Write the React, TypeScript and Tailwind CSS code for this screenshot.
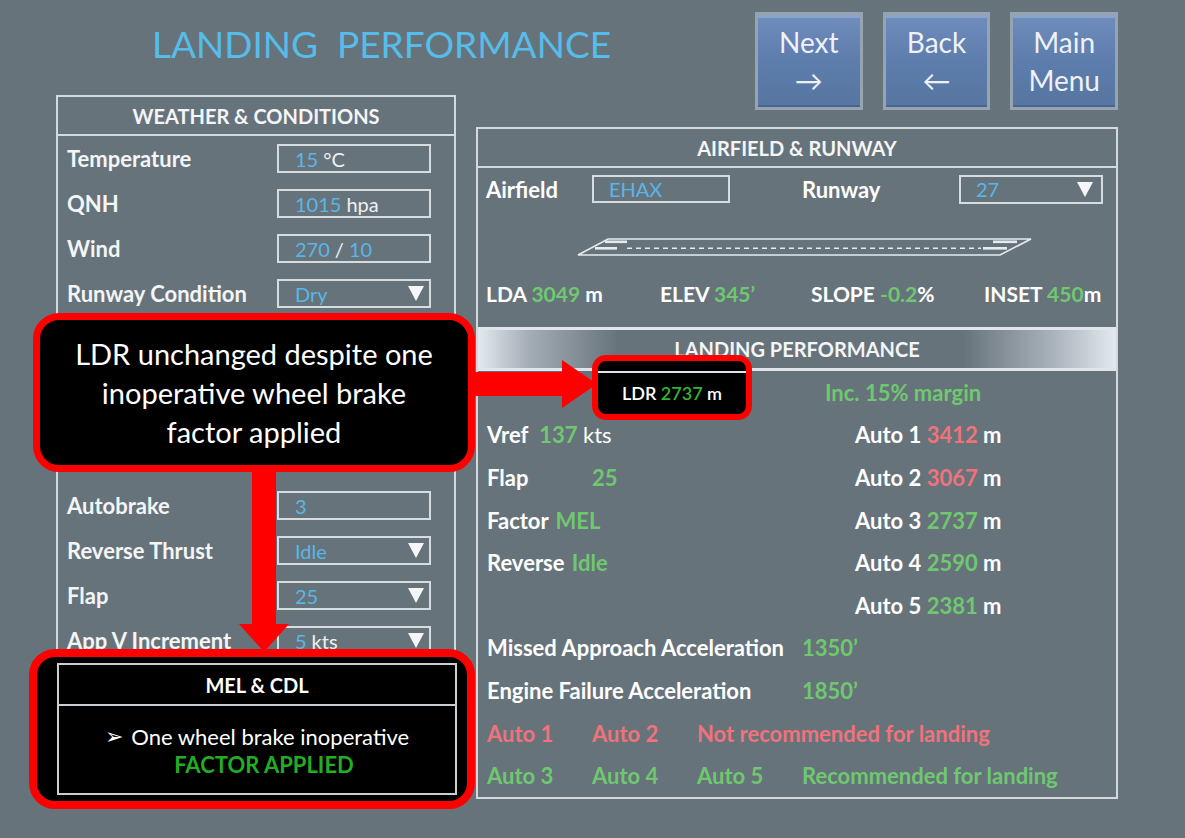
import React from 'react';

const G = 'text-[#6fc86f]';
const R = 'text-[#f0727a]';
const B = 'text-[#5ab6e6]';

function Caret() {
  return (
    <svg className="ml-auto" width="16" height="15" viewBox="0 0 16 15">
      <polygon points="0,0 16,0 8,15" fill="#f4f6f8" />
    </svg>
  );
}

function Field({ label, value, unit, drop }: { label: string; value: string; unit?: React.ReactNode; drop?: boolean }) {
  return (
    <div className="h-[45px] flex items-center pl-[9px]">
      <div className="w-[210px] font-bold text-[22px] text-[#f3f5f7] whitespace-nowrap">{label}</div>
      <div className="w-[154px] h-[29px] border-2 border-[#d6dce0] flex items-center pl-[16px] pr-[5px] text-[20px]">
        <span className={B}>{value}</span>
        {unit && <span className="ml-[5px] text-[#eef1f3]">{unit}</span>}
        {drop && <Caret />}
      </div>
    </div>
  );
}

function NavButton({ top, bottom }: { top: string; bottom: string }) {
  return (
    <div className="w-[108px] h-[98px] border-[3px] border-[#97a3b1] bg-gradient-to-b from-[#6f8dbd] via-[#5d7dad] to-[#56759f] shadow-[inset_0_3px_0_#8aa3c9,inset_0_-2px_0_#4a6590] flex flex-col items-center justify-center text-[28px] leading-[38px] text-[#eef2f8]">
      <span>{top}</span>
      <span>{bottom}</span>
    </div>
  );
}

export default function App() {
  return (
    <div className="relative w-[1185px] h-[838px] overflow-hidden bg-[#67737b] font-['Lato','Liberation_Sans',sans-serif] text-white">
      <div className="flex">
        {/* left column */}
        <div className="ml-[56px] w-[400px] flex flex-col">
          <div className="h-[95px] pt-[25px] pl-[96px] whitespace-nowrap text-[37px] leading-none text-[#56bce9]">
            LANDING&nbsp;&nbsp;PERFORMANCE
          </div>
          <div className="border-2 border-[#d3d9dd]">
            <div className="h-[39px] border-b-2 border-[#d3d9dd] flex items-center justify-center font-bold text-[20px] text-[#f3f5f7]">
              WEATHER &amp; CONDITIONS
            </div>
            <Field label="Temperature" value="15" unit="°C" />
            <Field label="QNH" value="1015" unit="hpa" />
            <Field label="Wind" value="270" unit={<span>/ <span className={B}>10</span></span>} />
            <Field label="Runway Condition" value="Dry" drop />
            <div className="h-[167px]" />
            <Field label="Autobrake" value="3" />
            <Field label="Reverse Thrust" value="Idle" drop />
            <Field label="Flap" value="25" drop />
            <Field label="App V Increment" value="5" unit="kts" drop />
            <div className="h-[130px]" />
          </div>
        </div>

        {/* right column */}
        <div className="ml-[20px] w-[642px] flex flex-col">
          <div className="pt-[12px] pl-[279px] flex gap-[20px]">
            <NavButton top="Next" bottom="→" />
            <NavButton top="Back" bottom="←" />
            <NavButton top="Main" bottom="Menu" />
          </div>
          <div className="mt-[17px] border-2 border-[#d3d9dd] text-[22px]">
            <div className="h-[39px] border-b-2 border-[#d3d9dd] flex items-center justify-center font-bold text-[20px] text-[#f3f5f7]">
              AIRFIELD &amp; RUNWAY
            </div>
            <div className="h-[42px] flex items-center pl-[8px]">
              <div className="w-[106px] font-bold">Airfield</div>
              <div className="w-[138px] h-[28px] border-2 border-[#d6dce0] flex items-center pl-[15px] text-[20px]">
                <span className={B}>EHAX</span>
              </div>
              <div className="ml-[72px] w-[157px] font-bold">Runway</div>
              <div className="w-[144px] h-[29px] border-2 border-[#d6dce0] flex items-center pl-[15px] pr-[8px] text-[20px]">
                <span className={B}>27</span>
                <Caret />
              </div>
            </div>
            <div className="mt-[27px] h-[19px] pl-[99px]">
              <svg width="460" height="19" viewBox="0 0 460 19" fill="none">
                <polygon points="31,2 454,2 423,18 1,18" stroke="#e6ebee" strokeWidth="1.6" />
                <rect x="28" y="3.5" width="22" height="2.6" fill="#e6ebee" />
                <rect x="18" y="10" width="22" height="2.6" fill="#e6ebee" />
                <rect x="416" y="3.5" width="24" height="2.6" fill="#e6ebee" />
                <rect x="406" y="10" width="24" height="2.6" fill="#e6ebee" />
                <line x1="50" y1="11.3" x2="404" y2="11.3" stroke="#e6ebee" strokeWidth="1.4" strokeDasharray="5 4" />
              </svg>
            </div>
            <div className="mt-[25px] h-[26px] flex items-center pl-[8px] font-bold text-[21px]">
              <div className="w-[174px]">LDA <span className={G}>3049</span> m</div>
              <div className="w-[151px]">ELEV <span className={G}>345’</span></div>
              <div className="w-[173px]">SLOPE <span className={G}>-0.2</span>%</div>
              <div>INSET <span className={G}>450</span>m</div>
            </div>
            <div className="mt-[20px] h-[44px] border-y-[3px] border-[#dfe5ea] bg-[linear-gradient(to_right,#e3e9ef_0%,#a3adb5_8%,#67737b_22%,#67737b_76%,#a8b2ba_90%,#e3e9ef_100%)] flex items-center justify-center font-bold text-[20px] text-[#f3f5f7]">
              LANDING PERFORMANCE
            </div>
            <div className="pl-[9px] font-bold">
              <div className="h-[42.6px] flex items-center">
                <div className="w-[338px]" />
                <span className={G}>Inc. 15% margin</span>
              </div>
              <div className="h-[42.6px] flex items-center">
                <div className="w-[368px]">Vref <span className={`${G} ml-[6px]`}>137</span> <span className="font-normal">kts</span></div>
                <div>Auto 1 <span className={R}>3412</span> m</div>
              </div>
              <div className="h-[42.6px] flex items-center">
                <div className="w-[368px] flex"><span className="w-[105px]">Flap</span><span className={G}>25</span></div>
                <div>Auto 2 <span className={R}>3067</span> m</div>
              </div>
              <div className="h-[42.6px] flex items-center">
                <div className="w-[368px]">Factor <span className={`${G} ml-[2px]`}>MEL</span></div>
                <div>Auto 3 <span className={G}>2737</span> m</div>
              </div>
              <div className="h-[42.6px] flex items-center">
                <div className="w-[368px]">Reverse <span className={`${G} ml-[2px]`}>Idle</span></div>
                <div>Auto 4 <span className={G}>2590</span> m</div>
              </div>
              <div className="h-[42.6px] flex items-center">
                <div className="w-[368px]" />
                <div>Auto 5 <span className={G}>2381</span> m</div>
              </div>
              <div className="h-[42.6px] flex items-center">
                <div className="w-[315px] whitespace-nowrap">Missed Approach Acceleration</div>
                <span className={G}>1350’</span>
              </div>
              <div className="h-[42.6px] flex items-center">
                <div className="w-[315px] whitespace-nowrap">Engine Failure Acceleration</div>
                <span className={G}>1850’</span>
              </div>
              <div className={`h-[42.6px] flex items-center ${R}`}>
                <div className="w-[105px]">Auto 1</div>
                <div className="w-[105px]">Auto 2</div>
                <div>Not recommended for landing</div>
              </div>
              <div className={`h-[42.6px] flex items-center ${G}`}>
                <div className="w-[105px]">Auto 3</div>
                <div className="w-[105px]">Auto 4</div>
                <div className="w-[105px]">Auto 5</div>
                <div>Recommended for landing</div>
              </div>
            </div>
          </div>
        </div>
      </div>

      {/* annotation: callout */}
      <div className="absolute left-[33px] top-[313px] w-[442px] h-[159px] border-[7px] border-[#ff0000] rounded-[26px] bg-black flex flex-col items-center justify-center text-[29px] leading-[39px] text-white text-center">
        <span>LDR unchanged despite one</span>
        <span>inoperative wheel brake</span>
        <span>factor applied</span>
      </div>

      {/* annotation arrows */}
      <svg className="absolute left-[470px] top-[358px]" width="130" height="54" viewBox="0 0 130 54">
        <rect x="0" y="14" width="96" height="24" fill="#ff0000" />
        <polygon points="92,2 127,26 92,50" fill="#ff0000" />
      </svg>
      <svg className="absolute left-[238px] top-[468px]" width="52" height="186" viewBox="0 0 52 186">
        <rect x="14" y="0" width="24" height="160" fill="#ff0000" />
        <polygon points="1,156 51,156 26,184" fill="#ff0000" />
      </svg>

      {/* annotation: LDR highlight */}
      <div className="absolute left-[592px] top-[355px] w-[160px] h-[65px] border-[6px] border-[#ff0000] rounded-[14px] bg-black flex flex-col">
        <div className="mt-[10px] h-[2px] bg-[#dfe5ea]" />
        <div className="flex-1 flex items-center justify-center text-[18px] font-semibold">
          LDR&nbsp;<span className="text-[#2fb52f]">2737</span>&nbsp;m
        </div>
      </div>

      {/* annotation: MEL & CDL */}
      <div className="absolute left-[29px] top-[649px] w-[446px] h-[160px] border-[8px] border-[#ff0000] rounded-[26px] bg-black pl-[20px] pt-[6px]">
        <div className="w-[400px] h-[132px] border-2 border-[#c9ced2] flex flex-col">
          <div className="h-[41px] border-b-2 border-[#c9ced2] flex items-center justify-center font-bold text-[20px]">
            MEL &amp; CDL
          </div>
          <div className="flex-1 flex flex-col items-center pt-[17px] text-[22px] leading-[28px]">
            <span className="flex items-center">
              <span className="font-['DejaVu_Sans'] text-[22px] leading-none mr-[8px]">➢</span>One wheel brake inoperative
            </span>
            <span className="font-bold text-[#22ad22] ml-[14px]">FACTOR APPLIED</span>
          </div>
        </div>
      </div>
    </div>
  );
}
